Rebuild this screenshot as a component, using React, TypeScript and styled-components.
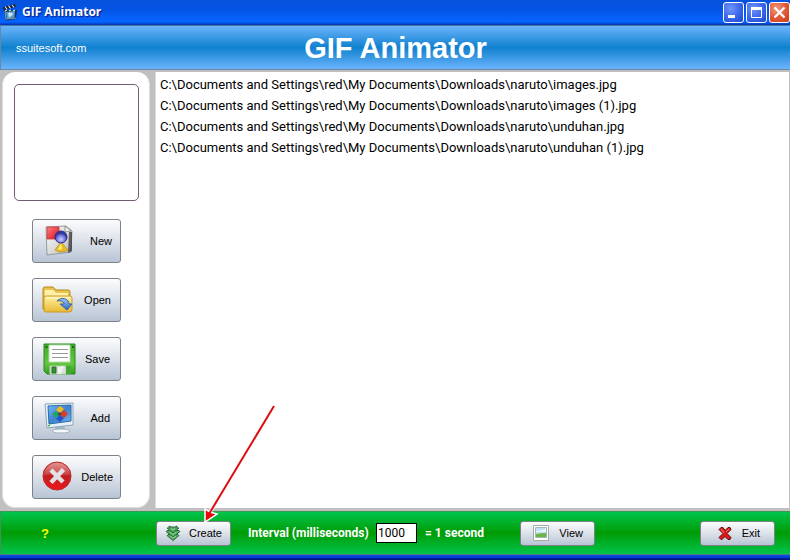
import React from "react";
import styled, { createGlobalStyle } from "styled-components";

const GlobalStyle = createGlobalStyle`
  * { box-sizing: border-box; }
  body {
    margin: 0;
    background: #c0c0c0;
    font-family: "Liberation Sans", Arial, sans-serif;
    color: #000;
  }
  button, input { font-family: inherit; }
`;

const Window = styled.div`
  position: relative;
  display: flex;
  flex-direction: column;
  min-height: 100vh;
  background: #c0c0c0;
`;

const TitleBar = styled.header`
  display: flex;
  align-items: center;
  gap: 4px;
  height: 25px;
  padding: 0 0 1px 2px;
  background: linear-gradient(#0652dc 0%, #0553e4 35%, #0560f8 70%, #0664ff 88%, #0243c8 96%, #083494 100%);
`;

const WindowTitle = styled.span`
  flex: 1;
  color: #fff;
  font-family: "Open Sans", sans-serif;
  font-size: 12px;
  font-weight: 700;
  line-height: 16px;
  text-shadow: 1px 1px 1px #0a1883;
`;

const WindowControls = styled.div`
  display: flex;
  gap: 2px;
`;

const ControlButton = styled.button<{ $danger?: boolean }>`
  display: block;
  width: 21px;
  height: 21px;
  padding: 0;
  border: 1px solid #fff;
  border-radius: 3px;
  background: ${(p) =>
    p.$danger
      ? "radial-gradient(circle at 35% 30%, #f09a80, #e35a38 50%, #c53a16)"
      : "radial-gradient(circle at 35% 30%, #7396fa, #3c68ec 50%, #1d49cf)"};
  svg { display: block; }
`;

const Banner = styled.div`
  display: grid;
  grid-template-columns: 1fr auto 1fr;
  align-items: center;
  height: 45px;
  padding: 0 15px 0 15px;
  border-top: 1px solid #4674a8;
  border-bottom: 1px solid #6587a8;
  border-left: 1px solid #6587a8;
  background: linear-gradient(#6bb4fb, #1081cf 50%, #6bb4fb);
`;

const SiteLink = styled.a`
  color: #fff;
  font-size: 11px;
  line-height: 16px;
  text-decoration: none;
`;

const Heading = styled.h1`
  margin: 0;
  color: #fff;
  font-size: 29px;
  font-weight: 700;
  line-height: 34px;
`;

const Workspace = styled.main`
  flex: 1;
  display: flex;
  gap: 5px;
  padding: 2px 1px 3px 2px;
`;

const Sidebar = styled.aside`
  flex: none;
  display: flex;
  flex-direction: column;
  align-items: center;
  width: 148px;
  padding: 12px 10px 8px 11px;
  border: 1px solid #ddd;
  border-top: 0;
  border-radius: 13px;
  background: #fff;
`;

const Preview = styled.div`
  align-self: stretch;
  height: 117px;
  border: 1px solid #755a75;
  border-radius: 5px;
  margin-bottom: 18px;
`;

const ToolList = styled.nav`
  display: flex;
  flex-direction: column;
  gap: 15px;
`;

const PushButton = styled.button`
  display: flex;
  align-items: center;
  justify-content: space-between;
  border: 1px solid #7c8288;
  border-radius: 3px;
  background: linear-gradient(#fbfcfd, #dce1e9 50%, #b8c4d5);
  color: #000;
  font-size: 11px;
  line-height: 16px;
  svg { flex: none; display: block; }
`;

const ToolButton = styled(PushButton)`
  width: 89px;
  height: 44px;
  padding: 0 7px 0 9px;
`;

const Caption = styled.span<{ $inset?: number }>`
  padding-right: ${(p) => p.$inset ?? 0}px;
`;

const FileList = styled.ul`
  flex: 1;
  margin: 0;
  padding: 2px 0 0 4px;
  list-style: none;
  background: #fff;
  border-left: 1px solid #ddd;
`;

const FileItem = styled.li`
  font-family: Roboto, sans-serif;
  font-size: 13px;
  line-height: 21px;
`;

const BottomBar = styled.footer`
  display: flex;
  align-items: center;
  height: 44px;
  padding: 0 15px 0 0;
  border: 1px solid #3f9555;
  border-right: 0;
  border-bottom-color: #4a807c;
  background: linear-gradient(#00c44c, #009c05 50%, #00c44c);
`;

const WindowEdge = styled.div`
  height: 5px;
  background: linear-gradient(#0848e0 40%, #0020a0 70%, #001070);
`;

const HelpButton = styled.button`
  width: 88px;
  margin-right: 67px;
  padding: 0;
  border: 0;
  background: none;
  color: #ff0;
  font-size: 13px;
  font-weight: 700;
`;

const ActionButton = styled(PushButton)<{ $lead?: number }>`
  flex: none;
  width: 75px;
  height: 25px;
  padding: 0 8px 0 ${(p) => p.$lead ?? 8}px;
`;

const IntervalGroup = styled.div`
  display: flex;
  align-items: center;
  gap: 8px;
  flex: none;
  width: 272px;
  margin: 0 0 0 17px;
  color: #fff;
  font-family: Roboto, sans-serif;
  font-size: 12px;
  font-weight: 700;
  line-height: 16px;
  white-space: nowrap;
`;

const IntervalLabel = styled.label`
  width: 120px;
`;

const IntervalInput = styled.input`
  width: 41px;
  height: 20px;
  padding: 0 1px;
  border: 1px solid #000;
  border-radius: 0;
  background: #fff;
  color: #000;
  font-size: 12px;
`;

const Spacer = styled.div`
  flex: 1;
`;

const Pointer = styled.svg`
  position: absolute;
  left: 196px;
  top: 400px;
  pointer-events: none;
`;

const ClapperIcon = () => (
  <svg width="16" height="18" viewBox="0 0 16 18" aria-hidden="true">
    <path d="M2 7h13l-1 9-10 1.500z" fill="#173254" />
    <path d="M4 9l9-1-.6 6.500L5 15.500z" fill="#55a0d0" />
    <path d="M6 10l4-.5 1 2-4 3z" fill="#c6e6f5" />
    <path d="M1 4l12-3 .7 3L1.700 7z" fill="#162236" />
    <path d="M3 3.500l2 2.600M6.500 2.700l2 2.600M10 2l2 2.400M3 8l2-1M7 8l2-1M11 8l2-1" stroke="#cde2ee" strokeWidth="1.100" />
    <path d="M3 8l1 8 10-1" fill="none" stroke="#7fa4bf" />
  </svg>
);

const NewIcon = () => (
  <svg width="34" height="34" viewBox="0 0 34 34" aria-hidden="true">
    <defs>
      <linearGradient id="sheet" x1="0" y1="0" x2="1" y2="1"><stop stopColor="#fff" /><stop offset="1" stopColor="#bbb" /></linearGradient>
      <linearGradient id="redSq" x1="0" y1="0" x2="1" y2="1"><stop stopColor="#ff8080" /><stop offset="1" stopColor="#d80d20" /></linearGradient>
      <radialGradient id="orb" cy=".7"><stop stopColor="#c5ccff" /><stop offset=".6" stopColor="#7c85e6" /><stop offset="1" stopColor="#3a3fa5" /></radialGradient>
    </defs>
    <path d="M4 3l20-1 6 5-1 21-24 3z" fill="url(#sheet)" stroke="#888" strokeWidth=".8" />
    <path d="M27 8h3v19l-4 2z" fill="#302c2d" opacity=".7" />
    <path d="M23 2v6l6-1z" fill="#eee" stroke="#777" strokeWidth=".7" />
    <path d="M5 3h12v12H5z" fill="url(#redSq)" stroke="#c23a43" strokeWidth=".8" />
    <path d="M19 18l-6 8q6 4 13 0z" fill="#ebbc20" stroke="#b18a1a" strokeWidth=".7" />
    <path d="M19 19l-3 7 4-1z" fill="#fff080" />
    <circle cx="19" cy="13" r="6" fill="url(#orb)" stroke="#252878" />
    <path d="M14 11c2-5 8-5 10 0-3-2-7-2-10 0" fill="#3138a0" />
  </svg>
);

const OpenIcon = () => (
  <svg width="34" height="34" viewBox="0 0 34 34" aria-hidden="true">
    <defs>
      <linearGradient id="folder" x1="0" y1="0" x2="0" y2="1"><stop stopColor="#fff2a4" /><stop offset="1" stopColor="#e8b932" /></linearGradient>
      <linearGradient id="blueArrow" x1="0" y1="0" x2="0" y2="1"><stop stopColor="#9cc8fa" /><stop offset="1" stopColor="#3265c0" /></linearGradient>
    </defs>
    <path d="M1 26V6q0-2 2-2h8l3 3h12q2 0 2 2v17z" fill="#e9c450" stroke="#b18819" />
    <path d="M3 7h8l3 3h12v4H3z" fill="#fff1a8" />
    <path d="M2 28V15q0-2 2-2h24q2 0 2 2v11q0 3-3 3H4q-2 0-2-1z" fill="url(#folder)" stroke="#c69b26" />
    <path d="M4 15h24" stroke="#fff8c9" />
    <path d="M15 18c5-5 12-2 12 3h3l-5 6-7-6h4c0-2-3-4-7-3z" fill="url(#blueArrow)" stroke="#285baa" strokeWidth=".9" />
  </svg>
);

const SaveIcon = () => (
  <svg width="36" height="34" viewBox="0 0 36 34" aria-hidden="true">
    <defs><linearGradient id="disk" x1="0" y1="0" x2="0" y2="1"><stop stopColor="#44a92c" /><stop offset=".65" stopColor="#63c740" /><stop offset="1" stopColor="#319d20" /></linearGradient></defs>
    <path d="M2 2h31v30H5l-3-3z" fill="url(#disk)" stroke="#278b1c" />
    <path d="M7 3h21v17H7z" fill="#fff" stroke="#b7dbaf" />
    <path d="M10 7.500h16M10 11.500h16M10 15.500h16" stroke="#999" />
    <path d="M3.500 4h2v2h-2zM30 4h2v2h-2z" fill="#176718" />
    <path d="M8 24h16v8H8z" fill="#ddd" stroke="#b4d7ad" />
    <path d="M10 25h4v6h-4z" fill="#32962a" stroke="#286d24" />
    <path d="M24 24h5v8h-5z" fill="#45a834" />
    <path d="M16 25l6-1-3 8h-3z" fill="#fff" opacity=".6" />
  </svg>
);

const AddIcon = () => (
  <svg width="34" height="36" viewBox="0 0 34 36" aria-hidden="true">
    <defs><linearGradient id="screen" x1="0" y1="0" x2="1" y2="1"><stop stopColor="#73bcf4" /><stop offset=".5" stopColor="#3f82cf" /><stop offset="1" stopColor="#77b7ef" /></linearGradient></defs>
    <path d="M12 25l10-1 1 5-9 1z" fill="#9db7c6" />
    <ellipse cx="19" cy="31" rx="9" ry="2" fill="#f4f8fa" stroke="#a2b2bc" />
    <path d="M3 4l28-1v22L5 28z" fill="#e5f0f6" stroke="#8fa7b8" />
    <path d="M6 6l23-1v16L7 24z" fill="url(#screen)" stroke="#2c68a8" />
    <path d="M18 6l4 3-4 4-4-3z" fill="#f7bc14" />
    <path d="M14 11l4 3-4 4-4-4z" fill="#1ca567" />
    <path d="M22 10l4 4-4 4-4-4z" fill="#df3a26" />
    <path d="M18 15l4 3-4 4-4-3z" fill="#2552c4" />
    <path d="M16 13l2-1 2 2-2 2-2-1z" fill="#553d20" opacity=".75" />
    <path d="M6 25l2-.3v1.600L6 26.600z" fill="#28c83c" />
  </svg>
);

const DeleteIcon = () => (
  <svg width="31" height="32" viewBox="0 0 31 32" aria-hidden="true">
    <defs><linearGradient id="redBall" x1="0" y1="0" x2="0" y2="1"><stop stopColor="#e08b87" /><stop offset=".5" stopColor="#bf2023" /><stop offset="1" stopColor="#ef1619" /></linearGradient></defs>
    <circle cx="15" cy="15" r="14" fill="url(#redBall)" stroke="#b82a2e" />
    <path d="M9 9l12 12M21.500 8.500L9 21.500" fill="none" stroke="#e2dfe3" strokeWidth="4.500" />
    <path d="M2 15C2-1.500 28-1.500 28 13 20 16 9 10 2 15" fill="#fff" opacity=".12" />
  </svg>
);

const CreateIcon = () => (
  <svg width="16" height="16" viewBox="0 0 16 16" aria-hidden="true">
    <g fill="#4fa45c" stroke="#1f6a35" strokeWidth=".9" strokeLinejoin="round">
      <path d="M3 9.500h10l1 1L8 15.500 2 10.500z" />
      <path d="M2 5.500h12l1 1-7 5.500-7-5.500z" />
      <path d="M4 1l2 1h4l2-1v2h2L8 8 2 3h2z" />
    </g>
    <path d="M6 3.500l2 1.500 2-1.500M4.500 7L8 9.500 11.500 7M5 11l3 2 3-2" fill="none" stroke="#a4dca0" strokeWidth=".9" />
  </svg>
);

const ViewIcon = () => (
  <svg width="16" height="16" viewBox="0 0 16 16" aria-hidden="true">
    <path d="M.5.5h15v15H.5z" fill="#fff" stroke="#a4aba7" />
    <path d="M2.500 2.500h11v10h-11z" fill="#bde1f3" stroke="#9fb9b5" />
    <path d="M3 7h10V3C10 6 5 5 3 6z" fill="#e9f6ff" />
    <path d="M3 9q5-1 10-1v4H3z" fill="#69b743" />
  </svg>
);

const ExitIcon = () => (
  <svg width="15" height="15" viewBox="0 0 15 15" aria-hidden="true">
    <path d="M3 1.500h2l2 3 3-3h2l1 2-4 4 4 4-1 2h-2l-3-3-3 3H3l-2-2 4-4-4-4z" fill="#df1717" stroke="#610b0b" />
    <path d="M3 3l3 4M11 3L8 6" stroke="#ff8080" />
  </svg>
);

const files = ["images.jpg", "images (1).jpg", "unduhan.jpg", "unduhan (1).jpg"];

const tools = [
  { label: "New", icon: <NewIcon />, inset: 1 },
  { label: "Open", icon: <OpenIcon />, inset: 2 },
  { label: "Save", icon: <SaveIcon />, inset: 3 },
  { label: "Add", icon: <AddIcon />, inset: 3 },
  { label: "Delete", icon: <DeleteIcon />, inset: 0 },
];

export default function App() {
  return (
    <>
      <GlobalStyle />
      <Window>
        <TitleBar>
          <ClapperIcon />
          <WindowTitle>GIF Animator</WindowTitle>
          <WindowControls>
            <ControlButton aria-label="Minimize">
              <svg width="19" height="19" viewBox="0 0 19 19"><path d="M4 12h7v3H4z" fill="#fff" /></svg>
            </ControlButton>
            <ControlButton aria-label="Maximize">
              <svg width="19" height="19" viewBox="0 0 19 19"><path d="M4.500 5v9.500h10V5M4 5.500h11" fill="none" stroke="#fff" /><path d="M4 4h11v3H4z" fill="#fff" /></svg>
            </ControlButton>
            <ControlButton $danger aria-label="Close">
              <svg width="19" height="19" viewBox="0 0 19 19"><path d="M4.500 4.500l10 10M14.500 4.500l-10 10" stroke="#fff" strokeWidth="2.200" /></svg>
            </ControlButton>
          </WindowControls>
        </TitleBar>
        <Banner>
          <SiteLink href="#">ssuitesoft.com</SiteLink>
          <Heading>GIF Animator</Heading>
        </Banner>
        <Workspace>
          <Sidebar>
            <Preview />
            <ToolList>
              {tools.map((t) => (
                <ToolButton key={t.label}>
                  {t.icon}
                  <Caption $inset={t.inset}>{t.label}</Caption>
                </ToolButton>
              ))}
            </ToolList>
          </Sidebar>
          <FileList>
            {files.map((f) => (
              <FileItem key={f}>{"C:\\Documents and Settings\\red\\My Documents\\Downloads\\naruto\\" + f}</FileItem>
            ))}
          </FileList>
        </Workspace>
        <BottomBar>
          <HelpButton>?</HelpButton>
          <ActionButton><CreateIcon />Create</ActionButton>
          <IntervalGroup>
            <IntervalLabel htmlFor="interval">Interval (milliseconds)</IntervalLabel>
            <IntervalInput id="interval" defaultValue="1000" />
            <span>= 1 second</span>
          </IntervalGroup>
          <ActionButton $lead={12}><ViewIcon /><Caption $inset={3}>View</Caption></ActionButton>
          <Spacer />
          <ActionButton $lead={17}><ExitIcon /><Caption $inset={6}>Exit</Caption></ActionButton>
        </BottomBar>
        <WindowEdge />
        <Pointer width="86" height="126" viewBox="0 0 86 126" aria-hidden="true">
          <path d="M78 6L14 112" stroke="#fff" strokeWidth="4" opacity=".8" />
          <path d="M9 122V109l5 3 7 2z" fill="#e8090f" stroke="#fff" strokeWidth="1.500" />
          <path d="M78 6L13 114" stroke="#dc0c10" strokeWidth="2" />
        </Pointer>
      </Window>
    </>
  );
}
